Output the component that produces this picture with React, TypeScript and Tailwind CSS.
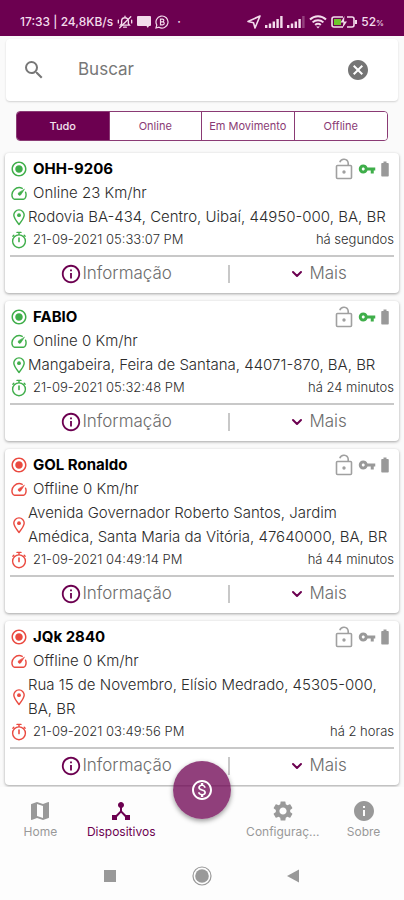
import {
  MdBatteryFull,
  MdCancel,
  MdDeviceHub,
  MdInfo,
  MdInfoOutline,
  MdMap,
  MdOutlineMonetizationOn,
  MdRadioButtonChecked,
  MdSearch,
  MdSettings,
  MdVpnKey,
} from "react-icons/md"
import { FiChevronDown } from "react-icons/fi"

type Device = {
  name: string
  status: string
  online: boolean
  address: string
  date: string
  ago: string
}

const devices: Device[] = [
  { name: "OHH-9206", status: "Online 23 Km/hr", online: true, address: "Rodovia BA-434, Centro, Uibaí, 44950-000, BA, BR", date: "21-09-2021 05:33:07 PM", ago: "há segundos" },
  { name: "FABIO", status: "Online 0 Km/hr", online: true, address: "Mangabeira, Feira de Santana, 44071-870, BA, BR", date: "21-09-2021 05:32:48 PM", ago: "há 24 minutos" },
  { name: "GOL Ronaldo", status: "Offline 0 Km/hr", online: false, address: "Avenida Governador Roberto Santos, Jardim Amédica, Santa Maria da Vitória, 47640000, BA, BR", date: "21-09-2021 04:49:14 PM", ago: "há 44 minutos" },
  { name: "JQk 2840", status: "Offline 0 Km/hr", online: false, address: "Rua 15 de Novembro, Elísio Medrado, 45305-000, BA, BR", date: "21-09-2021 03:49:56 PM", ago: "há 2 horas" },
]

const tabs = ["Tudo", "Online", "Em Movimento", "Offline"]

const Signal = ({ weak = false }) => (
  <svg viewBox="0 0 18 12" className="w-[18px] h-3" fill="currentColor">
    <rect x="0" y="9" width="2.4" height="3" />
    <rect x="3.8" y="7.500" width="2.4" height="4.500" />
    <rect x="7.6" y="5.500" width="2.4" height="6.500" />
    <rect x="11.4" y="3" width="2.4" height="9" />
    <rect x="15.2" y="0" width="2.4" height="12" opacity={weak ? 0.3 : 1} />
  </svg>
)

const GaugeIcon = ({ className = "" }) => (
  <svg viewBox="0 0 18 18" className={`size-[18px] ${className}`} fill="none" stroke="currentColor" strokeWidth="1.4" strokeLinecap="round" strokeLinejoin="round">
    <path d="M12.300 4.300A7.300 7.300 0 0 0 2.600 13.800q.6 1.400 1.900 1.400h9q1.300 0 1.900-1.400a7.300 7.300 0 0 0 .2-5.600" />
    <path d="M14.300 5.400l-3.600 5.500a1.500 1.500 0 0 1-2.300-1.900z" fill="currentColor" strokeWidth="0.6" />
  </svg>
)

const PinIcon = ({ className = "" }) => (
  <svg viewBox="0 0 18 18" className={`size-[18px] shrink-0 ${className}`} fill="none" stroke="currentColor" strokeWidth="1.4" strokeLinejoin="round">
    <path d="M9 16.500C6 12.800 3.800 9.900 3.800 7.100a5.200 5.200 0 0 1 10.400 0c0 2.800-2.200 5.700-5.200 9.400z" />
    <circle cx="9" cy="7.200" r="1.900" fill="currentColor" stroke="none" />
  </svg>
)

const TimerIcon = ({ className = "" }) => (
  <svg viewBox="0 0 18 18" className={`size-[18px] ${className}`} fill="none" stroke="currentColor" strokeWidth="1.400" strokeLinecap="round">
    <circle cx="9" cy="10.300" r="6.400" />
    <path d="M9 7v3.600" strokeWidth="1.600" />
    <path d="M7 1.400h4M9 1.400v2M14.200 4.300l.9.9M3.800 4.300l-.9.9" />
  </svg>
)

const LockIcon = () => (
  <svg viewBox="0 0 20 24" className="w-5 h-6 text-[#a0a0a0]" fill="none" stroke="currentColor" strokeWidth="1.600" strokeLinejoin="round">
    <rect x="2.500" y="8.500" width="15" height="13" rx="1" />
    <path d="M5.800 5.300A4.300 4.300 0 0 1 14.200 6V8.500" />
    <circle cx="10" cy="15" r="1.700" fill="currentColor" stroke="none" />
  </svg>
)

const StatusBar = () => (
  <div className="h-9 bg-[#6c0050] text-[#f3dcec] flex items-center pt-2 px-5 text-xs font-medium">
    <span>17:33 | 24,8KB/s</span>
    <svg viewBox="0 0 18 16" className="w-4 h-4 ml-1" fill="none" stroke="currentColor" strokeWidth="1.500" strokeLinecap="round">
      <path d="M4 11.500h10L12.800 10V7a3.800 3.800 0 0 0-7.600 0v3zM7.500 13.800h3M9 1.500v1.300" />
      <path d="M15.500 2L3 14.500M1.500 6v3M16.500 6v3" />
    </svg>
    <svg viewBox="0 0 14 12" className="w-3.5 h-3 ml-1" fill="currentColor">
      <path d="M1 0h12q1 0 1 1v8q0 1-1 1h-1l-1.200 2L9.500 10H1q-1 0-1-1V1q0-1 1-1z" />
    </svg>
    <svg viewBox="0 0 14 14" className="size-3.5 ml-1" fill="none" stroke="currentColor" strokeWidth="1.2">
      <path d="M1 13l.8-3A6 6 0 1 1 4 12.200z" />
      <path d="M5.500 4.200h2a1.300 1.300 0 0 1 0 2.700h-2zM5.500 6.900h2.300a1.400 1.400 0 0 1 0 2.900H5.500z" />
    </svg>
    <span className="ml-2">·</span>
    <div className="ml-auto flex items-center gap-1">
      <svg viewBox="0 0 14 14" className="size-3.5" fill="none" stroke="currentColor" strokeWidth="1.6" strokeLinejoin="round">
        <path d="M13 1L1 6.500l5.500 1.300L8 13z" />
      </svg>
      <Signal />
      <Signal weak />
      <svg viewBox="0 0 18 14" className="w-[18px] h-3.5" fill="none" stroke="currentColor" strokeWidth="2">
        <path d="M1 4.500a11.500 11.500 0 0 1 16 0M3.600 7.400a7.800 7.800 0 0 1 10.800 0M6.200 10a4 4 0 0 1 5.600 0" />
        <path d="M9 13.500l-1.800-2h3.600z" fill="currentColor" stroke="none" />
      </svg>
      <svg viewBox="0 0 26 12" className="w-[26px] h-3" fill="none">
        <path d="M12 1H3Q1 1 1 3v6q0 2 2 2h9M16 1h5q2 0 2 2v6q0 2-2 2h-5" stroke="currentColor" strokeWidth="1.600" />
        <rect x="3" y="3" width="7" height="6" fill="#6cc62c" />
        <path d="M13.500 0l-4 6.500h3L11.500 12l4.500-6.500h-3z" fill="currentColor" />
        <path d="M24 4h2v4h-2z" fill="currentColor" />
      </svg>
      <span>52<span className="text-[8px]">%</span></span>
    </div>
  </div>
)

const SearchBox = () => (
  <label className="mx-1.5 mt-[3px] h-[62px] bg-white rounded shadow-[0_1px_2px_rgba(0,0,0,0.16)] flex items-center pl-4 pr-7">
    <MdSearch className="size-6 text-[#777]" />
    <input aria-label="Buscar" placeholder="Buscar" className="flex-1 min-w-0 ml-8 text-[17px] outline-none placeholder:text-[#777]" />
    <button type="button" aria-label="Limpar">
      <MdCancel className="size-6 text-[#757575]" />
    </button>
  </label>
)

const Tabs = () => (
  <div className="mx-4 mt-2.5 h-[30px] grid grid-cols-4 border border-[#8a3a74] rounded overflow-hidden text-[11px] divide-x divide-[#8a3a74]">
    {tabs.map((tab, index) => (
      <button key={tab} type="button" className={index === 0 ? "bg-[#6c0050] text-[#f3e3ee] font-medium" : "bg-white text-[#8a3a74] whitespace-nowrap"}>
        {tab}
      </button>
    ))}
  </div>
)

const DeviceCard = ({ device }: { device: Device }) => {
  const tone = device.online ? "text-[#3fae4a]" : "text-[#ea4a40]"
  return (
    <article className="bg-white rounded px-[5px] pt-1 pb-0.5 shadow-[0_1px_3px_rgba(0,0,0,0.35)] text-[#2c2c2c]">
      <div className="h-6 flex items-center">
        <MdRadioButtonChecked className={`size-[18px] ${tone}`} />
        <h2 className="ml-[5px] flex-1 text-[15px] font-bold text-black">{device.name}</h2>
        <LockIcon />
        <MdVpnKey className={`size-[18px] ml-1 ${device.online ? "text-[#3fae4a]" : "text-[#999]"}`} />
        <MdBatteryFull className="size-[18px] text-[#999]" />
      </div>
      <div className="h-6 flex items-center">
        <GaugeIcon className={tone} />
        <span className="ml-[5px] text-[15px] font-light">{device.status}</span>
      </div>
      <div className="flex items-center">
        <PinIcon className={tone} />
        <p className="text-[15px] leading-6 font-light -mr-1">{device.address}</p>
      </div>
      <div className="h-[22px] flex items-center">
        <TimerIcon className={tone} />
        <span className="ml-[5px] flex-1 text-[13px] font-light">{device.date}</span>
        <span className="text-[13px] font-light">{device.ago}</span>
      </div>
      <div className="mt-1 h-9 border-t-2 border-[#c8c8c8] grid grid-cols-[4fr_2px_3fr] items-center text-[17px] font-light text-[#6c6c6c]">
        <button type="button" className="flex items-center justify-center pr-1.5">
          <MdInfoOutline className="size-[22px] text-[#6c0050]" />
          Informação
        </button>
        <span className="h-[18px] bg-[#c8c8c8]" />
        <button type="button" className="flex items-center justify-center gap-1 pl-3">
          <FiChevronDown className="size-4 text-[#6c0050]" strokeWidth={3} />
          Mais
        </button>
      </div>
    </article>
  )
}

const BottomNav = () => (
  <nav className="relative grid grid-cols-5 h-14 text-[#999] text-xs">
    <a href="#home" className="flex flex-col items-center gap-px pt-3">
      <MdMap className="size-6" />
      Home
    </a>
    <a href="#dispositivos" className="flex flex-col items-center gap-px pt-3 text-[#6c0050]">
      <MdDeviceHub className="size-6" />
      Dispositivos
    </a>
    <button type="button" aria-label="Financeiro" className="absolute left-1/2 -translate-x-1/2 -top-[26px] size-[58px] rounded-full bg-[#6c0050]/75 text-white flex items-center justify-center shadow-[0_2px_5px_rgba(0,0,0,0.4)]">
      <MdOutlineMonetizationOn className="size-6" />
    </button>
    <a href="#config" className="col-start-4 flex flex-col items-center gap-px pt-3">
      <MdSettings className="size-6" />
      Configuraç...
    </a>
    <a href="#sobre" className="flex flex-col items-center gap-px pt-3">
      <MdInfo className="size-6" />
      Sobre
    </a>
  </nav>
)

const SystemNav = () => (
  <div className="flex justify-center items-center gap-[72px] h-[57px] pt-2 text-[#999]">
    <button type="button" aria-label="Recentes" className="size-5 flex items-center justify-center">
      <span className="size-3 bg-[#999]" />
    </button>
    <button type="button" aria-label="Início">
      <svg viewBox="0 0 20 20" className="size-5">
        <circle cx="10" cy="10" r="9" fill="none" stroke="currentColor" strokeWidth="1.200" />
        <circle cx="10" cy="10" r="6.800" fill="currentColor" />
      </svg>
    </button>
    <button type="button" aria-label="Voltar">
      <svg viewBox="0 0 20 20" className="size-5" fill="currentColor">
        <path d="M15 3.500v13L3 10z" />
      </svg>
    </button>
  </div>
)

const App = () => {
  return (
    <div className="min-h-screen flex flex-col bg-[#fafafa] font-['Inter',sans-serif]">
      <StatusBar />
      <SearchBox />
      <Tabs />
      <main className="mt-3 mx-[5px] mb-0.5 flex-1 flex flex-col gap-2">
        {devices.map((device) => (
          <DeviceCard key={device.name} device={device} />
        ))}
      </main>
      <footer className="bg-[#fdfdfd]">
        <BottomNav />
        <SystemNav />
      </footer>
    </div>
  )
}

export default App
